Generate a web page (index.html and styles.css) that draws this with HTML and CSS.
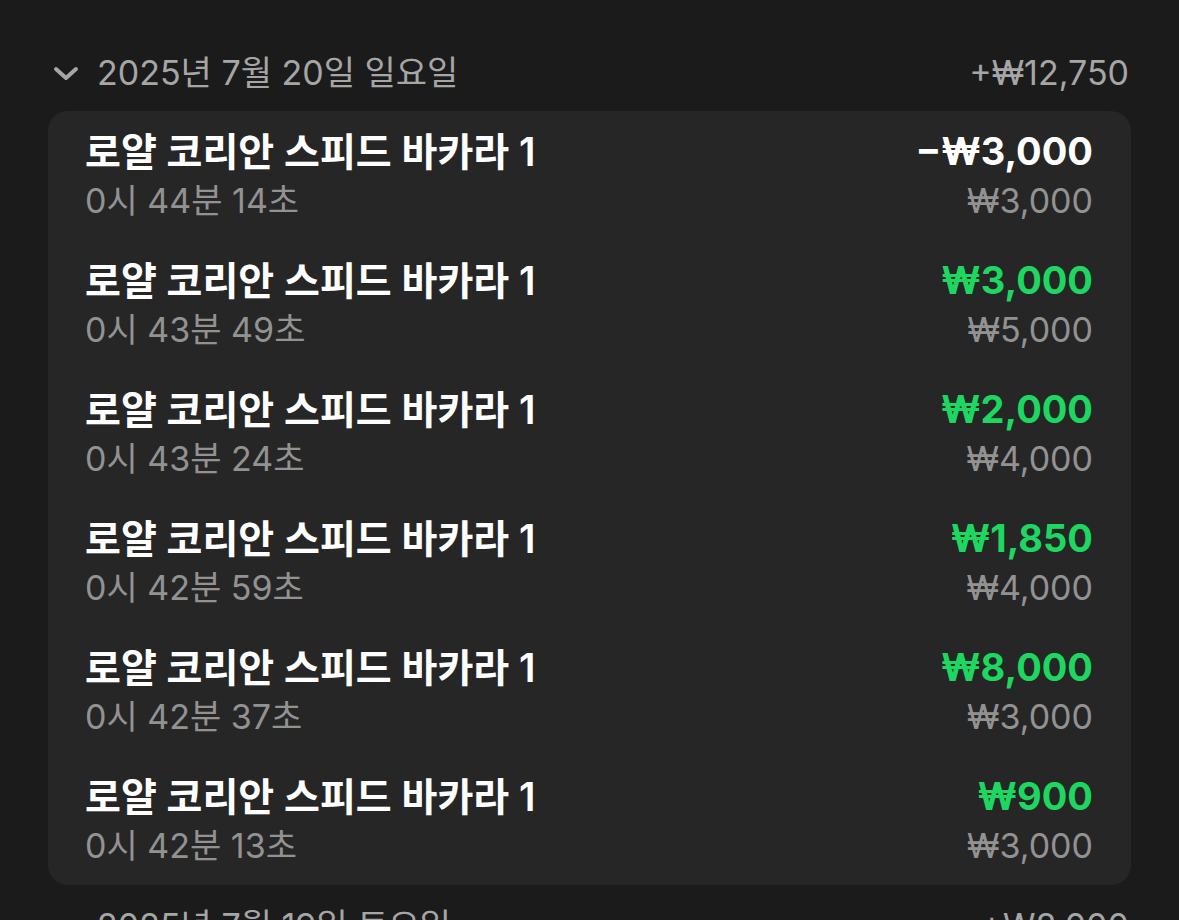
FILE: index.html
```html
<!DOCTYPE html>
<html lang="ko">
<head>
<meta charset="utf-8">
<link rel="stylesheet" href="styles.css">
</head>
<body>
<main class="page">
  <section class="day">
    <div class="day-head">
      <div class="day-title">
        <svg class="chev" viewBox="0 0 26 16" width="26" height="16"><path d="M3 3 L13 12 L23 3" fill="none" stroke="#a6a6a6" stroke-width="4" stroke-linecap="round" stroke-linejoin="round"/></svg>
        <span>2025년 7월 20일 일요일</span>
      </div>
      <span class="day-total">+₩12,750</span>
    </div>
    <div class="card">
      <div class="row">
        <div class="left"><div class="game">로얄 코리안 스피드 바카라 1</div><div class="time">0시 44분 14초</div></div>
        <div class="right"><div class="amt">−₩3,000</div><div class="bet">₩3,000</div></div>
      </div>
      <div class="row">
        <div class="left"><div class="game">로얄 코리안 스피드 바카라 1</div><div class="time">0시 43분 49초</div></div>
        <div class="right"><div class="amt win">₩3,000</div><div class="bet">₩5,000</div></div>
      </div>
      <div class="row">
        <div class="left"><div class="game">로얄 코리안 스피드 바카라 1</div><div class="time">0시 43분 24초</div></div>
        <div class="right"><div class="amt win">₩2,000</div><div class="bet">₩4,000</div></div>
      </div>
      <div class="row">
        <div class="left"><div class="game">로얄 코리안 스피드 바카라 1</div><div class="time">0시 42분 59초</div></div>
        <div class="right"><div class="amt win">₩1,850</div><div class="bet">₩4,000</div></div>
      </div>
      <div class="row">
        <div class="left"><div class="game">로얄 코리안 스피드 바카라 1</div><div class="time">0시 42분 37초</div></div>
        <div class="right"><div class="amt win">₩8,000</div><div class="bet">₩3,000</div></div>
      </div>
      <div class="row">
        <div class="left"><div class="game">로얄 코리안 스피드 바카라 1</div><div class="time">0시 42분 13초</div></div>
        <div class="right"><div class="amt win">₩900</div><div class="bet">₩3,000</div></div>
      </div>
    </div>
  </section>
  <section class="day">
    <div class="day-head">
      <div class="day-title">
        <svg class="chev" viewBox="0 0 26 16" width="26" height="16"><path d="M3 3 L13 12 L23 3" fill="none" stroke="#a6a6a6" stroke-width="4" stroke-linecap="round" stroke-linejoin="round"/></svg>
        <span>2025년 7월 19일 토요일</span>
      </div>
      <span class="day-total">+₩8,000</span>
    </div>
  </section>
</main>
</body>
</html>
```

FILE: styles.css
```css
html, body {
  margin: 0;
  padding: 0;
  background: #1b1b1b;
  height: 100%;
  overflow: hidden;
}
body {
  font-family: "Inter", "Noto Sans CJK KR", sans-serif;
  color: #fff;
}
.page {
  padding: 49px 48px 0 48px;
}
.day {
  margin-bottom: 17px;
}
.day-head {
  display: flex;
  justify-content: space-between;
  align-items: center;
  height: 48px;
  margin-bottom: 14px;
  padding: 0 2px 0 5px;
  color: #a6a6a6;
  font-size: 34px;
  line-height: 48px;
}
.day-title {
  display: flex;
  align-items: center;
  gap: 18px;
}
.chev {
  display: block;
  margin-top: 2px;
}
.card {
  background: #262626;
  border-radius: 20px;
}
.row {
  display: flex;
  justify-content: space-between;
  padding: 16px 38px 15px 37px;
}
.game {
  font-size: 39px;
  font-weight: 600;
  line-height: 49px;
  color: #fff;
}
.time {
  font-size: 34px;
  line-height: 49px;
  color: #929292;
}
.right {
  text-align: right;
}
.amt {
  font-size: 38px;
  font-weight: 700;
  line-height: 49px;
  color: #fff;
}
.amt.win {
  color: #1ed760;
}
.bet {
  font-size: 34px;
  line-height: 49px;
  color: #929292;
}
```
